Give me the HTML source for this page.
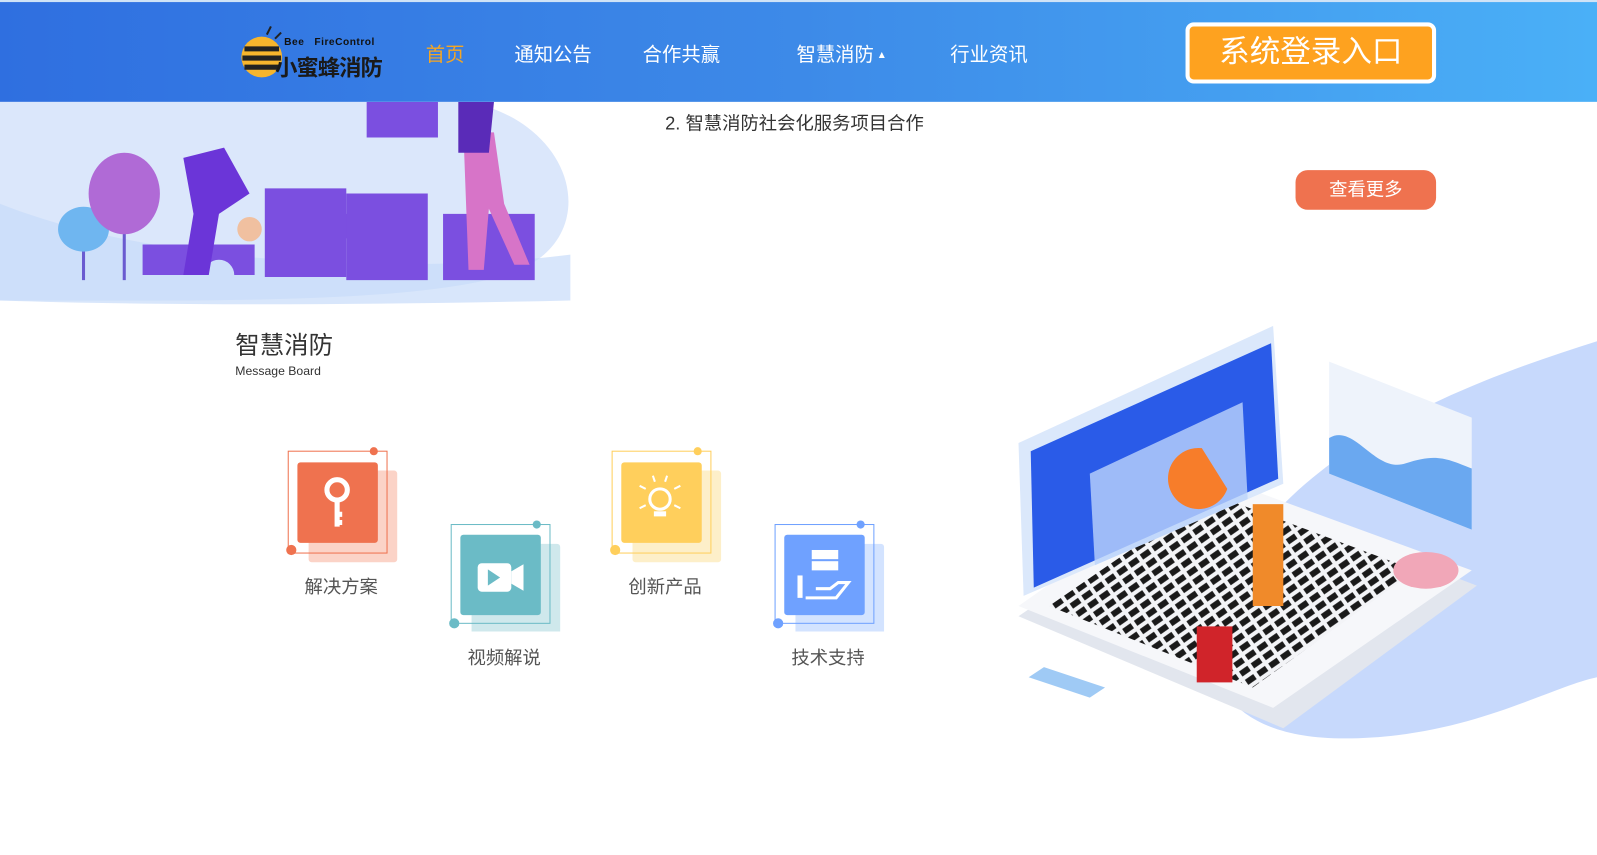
<!DOCTYPE html>
<html><head><meta charset="utf-8"><style>
*{margin:0;padding:0;box-sizing:border-box}
body{width:1597px;height:854px;overflow:hidden;background:#fff;font-family:"Liberation Sans","Noto Sans CJK SC",sans-serif;position:relative}
#w{position:absolute;left:0;top:0;width:1568px;height:839px;transform:scale(1.0185);transform-origin:0 0}
.hdr{position:absolute;left:0;top:0;width:1568px;height:100px;background:linear-gradient(90deg,#2f6fe0 0%,#3d8ae8 50%,#4ab0f7 100%);border-top:2px solid #cfe3f7}
.nav{position:absolute;top:38px;font-size:19px;color:#fff}
.abs{position:absolute}
.lbl{position:absolute;font-size:18px;color:#555}
</style></head><body><div id="w">
<svg class="abs" style="left:0;top:100px" width="600" height="200">
<path d="M0 0 H460 C560 20 590 120 520 160 C450 200 200 195 0 195 Z" fill="#dbe7fb"/>
<path d="M0 100 C150 160 400 170 560 150 L560 195 C350 200 150 200 0 195Z" fill="#c8dcfa" opacity=".7"/>
<g fill="#7b4fe0"><path d="M140 140 h110 v30 h-20 a15 15 0 0 0 -30 0 h-60z"/><path d="M260 85 h80 v25 a12 12 0 0 1 0 24 v38 h-80 z"/><path d="M340 90 h80 v85 h-80z"/><path d="M435 110 h90 v65 h-90z"/><path d="M360 0 h70 v35 h-70z"/></g>
<path d="M82 175 V110 M122 175 V70" stroke="#6a5bd0" stroke-width="3"/>
<ellipse cx="82" cy="125" rx="25" ry="22" fill="#6fb6f0"/><ellipse cx="122" cy="90" rx="35" ry="40" fill="#b06ad6"/>
<path d="M180 55 l40 -10 l25 45 l-30 20 l-10 60 h-25 l10 -60z" fill="#6b35d8"/>
<circle cx="245" cy="125" r="12" fill="#f0c0a0"/>
<path d="M455 30 h30 l10 70 l25 60 h-15 l-25 -55 l-5 60 h-15z" fill="#d774c8"/>
<path d="M450 0 h35 l-5 50 h-30z" fill="#5a2bb8"/>
</svg>
<div class="abs" style="left:653px;top:107px;font-size:18px;color:#333">2. 智慧消防社会化服务项目合作</div>
<div class="abs" style="left:1272px;top:167px;width:138px;height:39px;background:#ef724f;border-radius:12px;color:#fff;font-size:18px;text-align:center;line-height:39px">查看更多</div>

<div class="hdr">
 <svg class="abs" style="left:232px;top:22px" width="50" height="55"><ellipse cx="25" cy="32" rx="20" ry="20" fill="#f7b52d"/><path d="M8 24 h34 M6 33 h38 M8 42 h34" stroke="#222" stroke-width="5"/><path d="M30 10 l4 -8 M38 14 l6 -6" stroke="#222" stroke-width="2"/></svg>
 <div class="abs" style="left:279px;top:34px;font-size:10px;font-weight:bold;color:#111;letter-spacing:.5px">Bee&nbsp;&nbsp;&nbsp;FireControl</div>
 <div class="abs" style="left:270px;top:47px;font-size:22px;font-weight:bold;color:#1a1a1a;letter-spacing:-1px">小蜜蜂消防</div>
 <div class="nav" style="left:418px;top:37px;color:#f5a623">首页</div>
 <div class="nav" style="left:505px;top:37px">通知公告</div>
 <div class="nav" style="left:631px;top:37px">合作共赢</div>
 <div class="nav" style="left:782px;top:37px">智慧消防<span style="font-size:10px;vertical-align:3px"> ▲</span></div>
 <div class="nav" style="left:933px;top:37px">行业资讯</div>
 <div class="abs" style="left:1164px;top:20px;width:246px;height:60px;background:#fea21f;border:4px solid #fff;border-radius:8px;color:#fff;font-size:30px;text-align:center;line-height:52px">系统登录入口</div>
</div>

<div class="abs" style="left:231px;top:319px;font-size:24px;color:#333">智慧消防</div>
<div class="abs" style="left:231px;top:357px;font-size:12px;color:#333">Message Board</div>

<svg class="abs" style="left:275px;top:435px" width="610" height="185">
 <g transform="translate(8,8)"><rect x="20" y="19" width="87" height="90" rx="3" fill="#fbd3c7"/><rect x="0" y="0" width="97" height="100" fill="none" stroke="#ef724f"/><rect x="9" y="11" width="79" height="79" rx="3" fill="#ef724f"/><circle cx="84" cy="0" r="4" fill="#ef724f"/><circle cx="3" cy="97" r="5" fill="#ef724f"/>
 <circle cx="48" cy="38" r="10" fill="none" stroke="#fff" stroke-width="5"/><path d="M48 47 v27 M48 62 h5 M48 70 h5" stroke="#fff" stroke-width="5"/></g>
 <g transform="translate(168,80)"><rect x="20" y="19" width="87" height="90" rx="3" fill="#cfe8ec"/><rect x="0" y="0" width="97" height="97" fill="none" stroke="#6bbbc6"/><rect x="9" y="10" width="79" height="79" rx="3" fill="#6bbbc6"/><circle cx="84" cy="0" r="4" fill="#6bbbc6"/><circle cx="3" cy="97" r="5" fill="#6bbbc6"/>
 <rect x="26" y="38" width="33" height="28" rx="4" fill="#fff"/><path d="M59 46 l12 -7 v26 l-12 -7z" fill="#fff"/><path d="M36 44 l12 8 l-12 8z" fill="#6bbbc6"/></g>
 <g transform="translate(326,8)"><rect x="20" y="19" width="87" height="90" rx="3" fill="#fdefc9"/><rect x="0" y="0" width="97" height="100" fill="none" stroke="#ffcf5c"/><rect x="9" y="11" width="79" height="79" rx="3" fill="#ffcf5c"/><circle cx="84" cy="0" r="4" fill="#ffcf5c"/><circle cx="3" cy="97" r="5" fill="#ffcf5c"/>
 <circle cx="47" cy="47" r="10" fill="none" stroke="#fff" stroke-width="3"/><rect x="41" y="59" width="12" height="5" fill="#fff"/><path d="M42 30 l-2 -6 M52 30 l2 -6 M33 37 l-6 -3 M61 37 l6 -3 M33 53 l-6 3 M61 53 l6 3" stroke="#fff" stroke-width="2"/></g>
 <g transform="translate(486,80)"><rect x="20" y="19" width="87" height="90" rx="3" fill="#d3e3ff"/><rect x="0" y="0" width="97" height="97" fill="none" stroke="#6fa1ff"/><rect x="9" y="10" width="79" height="79" rx="3" fill="#6fa1ff"/><circle cx="84" cy="0" r="4" fill="#6fa1ff"/><circle cx="3" cy="97" r="5" fill="#6fa1ff"/>
 <rect x="36" y="25" width="26" height="9" fill="#fff"/><rect x="36" y="36" width="26" height="9" fill="#fff"/><rect x="22" y="50" width="5" height="22" fill="#fff"/><path d="M30 72 h30 l12 -15 h-10 l-8 6 h-14" fill="none" stroke="#fff" stroke-width="3"/></g>
</svg>
<div class="lbl" style="left:299px;top:562px">解决方案</div>
<div class="lbl" style="left:459px;top:632px">视频解说</div>
<div class="lbl" style="left:617px;top:562px">创新产品</div>
<div class="lbl" style="left:777px;top:632px">技术支持</div>

<svg class="abs" style="left:990px;top:315px" width="578" height="420">
 <defs><pattern id="k" width="14" height="10" patternUnits="userSpaceOnUse" patternTransform="rotate(-35)"><rect width="14" height="10" fill="#f3f4f7"/><rect x="2" y="2" width="10" height="6" fill="#1a1a1a"/></pattern></defs>
 <path d="M578 20 C450 60 300 120 230 230 C170 330 200 410 330 410 C450 410 530 360 578 350Z" fill="#b9d0fb" opacity=".8"/>
 <path d="M10 290 L270 400 L460 260 L200 160Z" fill="#e2e6ee"/>
 <path d="M10 280 L260 380 L455 245 L195 150Z" fill="#f6f7fa"/>
 <path d="M40 280 L240 360 L400 245 L200 170Z" fill="url(#k)"/>
 <path d="M15 270 L10 120 L260 5 L270 160Z" fill="#dbe8fb"/>
 <path d="M25 262 L22 128 L258 22 L265 155Z" fill="#2a5be8"/>
 <path d="M80 150 L230 80 L235 175 L85 240Z" fill="#bcd3fb" opacity=".8"/>
 <path d="M190 125 a30 30 0 1 0 25 40 Z" fill="#f77d2a"/>
 <path d="M315 40 L455 95 L455 205 L315 150Z" fill="#eef3fb"/>
 <path d="M315 115 C340 100 360 150 390 140 S430 135 455 145 L455 205 L315 150Z" fill="#6aa8f0"/>
 <rect x="240" y="180" width="30" height="100" fill="#f08a2a"/>
 <rect x="185" y="300" width="35" height="55" fill="#d0242a"/>
 <ellipse cx="410" cy="245" rx="32" ry="18" fill="#f1a7b8"/>
 <path d="M20 350 l60 20 l15 -10 l-60 -20z" fill="#9fcaf5"/>
</svg>
</div></body></html>
